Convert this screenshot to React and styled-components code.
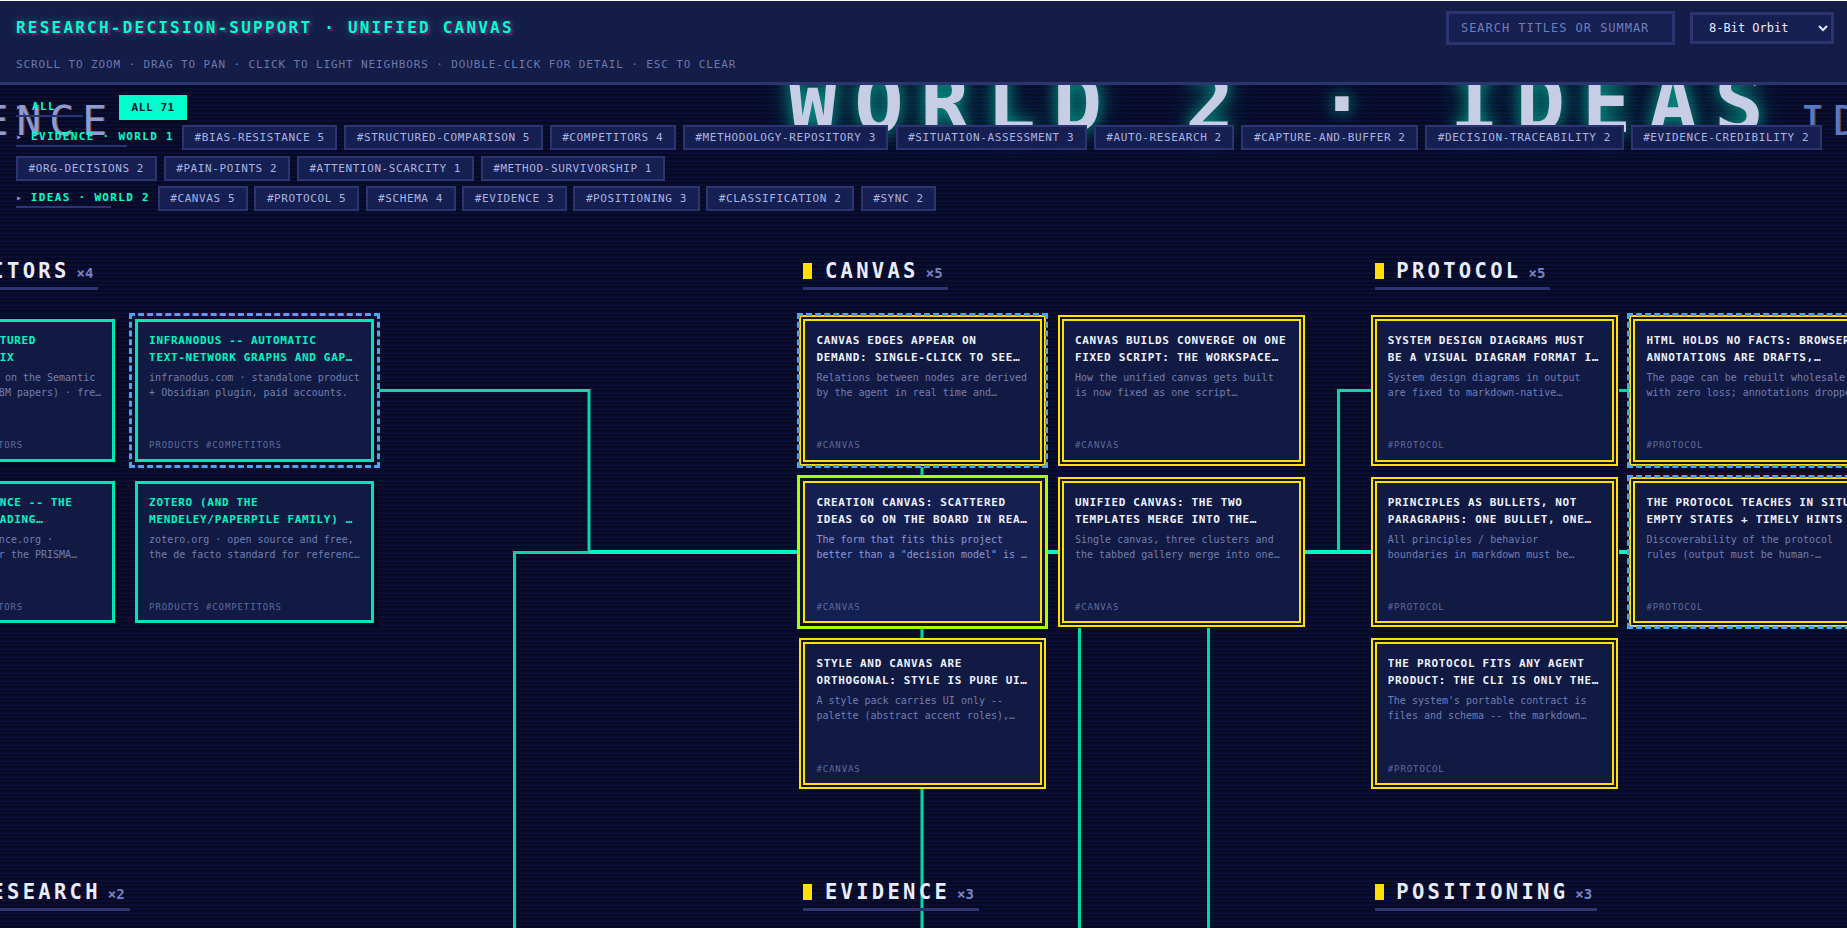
import React from "react";
import styled, { createGlobalStyle, css } from "styled-components";

const MONO = `"DejaVu Sans Mono", "Liberation Mono", monospace`;

const GlobalStyle = createGlobalStyle`
  html, body {
    margin: 0;
    padding: 0;
    height: 100%;
    overflow: hidden;
    background: #ffffff;
  }
  * { box-sizing: border-box; }
`;

const Page = styled.div`
  position: relative;
  margin-top: 1px;
  height: 927px;
  overflow: hidden;
  background: #0a0e33;
  font-family: ${MONO};
`;

const Canvas = styled.div`
  position: absolute;
  inset: -1px 0 0 0;
  background: repeating-linear-gradient(
    0deg,
    rgba(0, 0, 0, 0.32) 0 2px,
    transparent 2px 4px
  );
`;

const WorldLabel = styled.div`
  position: absolute;
  left: ${(p) => p.$x}px;
  top: ${(p) => p.$y}px;
  white-space: nowrap;
  font-size: 41px;
  line-height: 48px;
  letter-spacing: 8.2px;
  color: ${(p) => p.$color};
  text-shadow: 1px 0 0 rgba(190, 120, 70, 0.55);
`;

const WorldTitle = styled.div`
  position: absolute;
  left: 788px;
  top: 56px;
  white-space: nowrap;
  font-size: 82px;
  line-height: 96px;
  font-weight: 700;
  letter-spacing: 16.8px;
  color: #c6cde4;
  text-shadow: 0 0 16px rgba(0, 255, 204, 0.55), 0 0 32px rgba(0, 255, 204, 0.3);
`;

const Edges = styled.svg`
  position: absolute;
  left: 0;
  top: 0;
`;

const Cluster = styled.section`
  position: absolute;
  left: ${(p) => p.$x}px;
  top: ${(p) => p.$y}px;
`;

const Heading = styled.h2`
  display: inline-flex;
  align-items: center;
  margin: 0;
  height: 32px;
  padding: 0 5px 0 0;
  border-bottom: 3px solid #2c3570;
  &::before {
    content: "";
    width: 9px;
    height: 16px;
    margin: 0 12.5px 3px 0;
    background: #ffe000;
  }
`;

const HeadingName = styled.span`
  font-size: 20.5px;
  font-weight: 700;
  letter-spacing: 3.3px;
  color: #e8ecff;
  margin-bottom: 3px;
`;

const HeadingCount = styled.span`
  margin-left: 7px;
  font-size: 14px;
  font-weight: 700;
  color: #7683c0;
`;

const CardGrid = styled.div`
  display: grid;
  grid-template-columns: 239px 239px;
  grid-auto-rows: 142.7px;
  column-gap: 19.6px;
  row-gap: 19px;
  margin-top: 29px;
`;

const Card = styled.article`
  display: flex;
  flex-direction: column;
  ${(p) =>
    p.$kind === "idea"
      ? css`
          padding: 11px 11px 7.5px;
          border: 2px solid #ffe000;
          box-shadow: 0 0 0 2px #101326, 0 0 0 4px #ffe000;
        `
      : css`
          padding: 10px 10px 6.5px 11.5px;
          border: 3px solid #00e5b8;
          box-shadow: 4px 4px 0 rgba(0, 0, 0, 0.3);
        `}
  background: ${(p) => (p.$picked ? "#152052" : "#111a42")};
  ${(p) =>
    p.$picked &&
    css`
      box-shadow: 0 0 0 3px #101326, 0 0 0 6px #a6ff00;
    `}
  ${(p) =>
    p.$near &&
    css`
      outline: 3px dashed #4aa3f5;
      outline-offset: 3px;
    `}
`;

const CardTitle = styled.h3`
  margin: 0;
  height: 34px;
  font-size: 11px;
  line-height: 17px;
  font-weight: 700;
  letter-spacing: 0.66px;
  color: ${(p) => (p.$kind === "idea" ? "#eef1ff" : "#00f5c4")};
  display: -webkit-box;
  -webkit-box-orient: vertical;
  -webkit-line-clamp: 2;
  overflow: hidden;
`;

const CardBody = styled.p`
  margin: 4px 0 0;
  font-size: 10px;
  line-height: 15px;
  color: ${(p) => (p.$picked ? "#8c99d0" : "#717eb4")};
  display: -webkit-box;
  -webkit-box-orient: vertical;
  -webkit-line-clamp: 2;
  overflow: hidden;
`;

const CardTag = styled.div`
  margin-top: auto;
  font-size: 9px;
  line-height: 14px;
  letter-spacing: 0.9px;
  color: #5f6b9e;
`;

const Header = styled.header`
  position: relative;
  z-index: 2;
  height: 84px;
  padding: 0 13px 0 16px;
  border-bottom: 3px solid #2c3570;
  background: #141c48;
`;

const HeaderTop = styled.div`
  display: flex;
  align-items: center;
  justify-content: space-between;
  height: 53px;
`;

const AppTitle = styled.h1`
  margin: 0;
  font-size: 16px;
  font-weight: 700;
  letter-spacing: 2.22px;
  color: #00ffcc;
  text-shadow: 2px 2px 0 #6b1470, 0 0 8px rgba(0, 255, 204, 0.45);
`;

const Controls = styled.div`
  display: flex;
  align-items: center;
  gap: 15px;
`;

const Search = styled.input`
  width: 229px;
  height: 34px;
  padding: 0 22px 0 12px;
  border: 3px solid #2c3570;
  background: #161f52;
  color: #dfe5ff;
  font-family: ${MONO};
  font-size: 12px;
  letter-spacing: 0.96px;
  outline: none;
  &::placeholder {
    color: #707eb8;
    opacity: 1;
  }
`;

const Picker = styled.select`
  width: 144px;
  height: 32px;
  padding: 0 0 0 12px;
  border: 3px solid #2c3570;
  border-radius: 0;
  background: #161f52;
  color: #e6eaff;
  font-family: ${MONO};
  font-size: 12px;
`;

const Hint = styled.div`
  margin-top: 4px;
  font-size: 11px;
  line-height: 14px;
  letter-spacing: 0.88px;
  color: #6c79ad;
`;

const FilterBar = styled.nav`
  position: relative;
  z-index: 2;
  display: flex;
  flex-direction: column;
  gap: 5.5px;
  padding: 10px 16px 0;
`;

const FilterRow = styled.div`
  display: flex;
  flex-wrap: wrap;
  align-items: center;
  column-gap: ${(p) => p.$gap || 7}px;
  row-gap: 6.5px;
`;

const GroupLabel = styled.div`
  position: relative;
  display: flex;
  align-items: center;
  width: ${(p) => p.$box}px;
  margin-right: 1px;
  height: 24.5px;
  padding-bottom: 2px;
  white-space: nowrap;
  font-size: 11px;
  font-weight: 700;
  letter-spacing: 1.32px;
  color: #00ffcc;
  &::before {
    content: "▸";
    width: 16px;
    font-size: 10px;
    font-weight: 400;
    color: #8b96c4;
  }
  &::after {
    content: "";
    position: absolute;
    left: 0;
    bottom: 2.5px;
    width: ${(p) => p.$rule}px;
    height: 2px;
    background: #2c3570;
  }
`;

const Tag = styled.button`
  height: 24.5px;
  padding: 0 10.5px;
  border: 2px solid ${(p) => (p.$active ? "#00ffcc" : "#2c3570")};
  background: ${(p) => (p.$active ? "#00ffcc" : "#161f52")};
  color: ${(p) => (p.$active ? "#0a0f33" : "#aab4e0")};
  font-family: ${MONO};
  font-size: 11px;
  font-weight: ${(p) => (p.$active ? 700 : 400)};
  letter-spacing: 0.6px;
  white-space: nowrap;
  box-shadow: ${(p) => (p.$active ? "2px 2px 0 rgba(0,0,0,.4)" : "none")};
`;

const evidenceTags = [
  "#BIAS-RESISTANCE 5",
  "#STRUCTURED-COMPARISON 5",
  "#COMPETITORS 4",
  "#METHODOLOGY-REPOSITORY 3",
  "#SITUATION-ASSESSMENT 3",
  "#AUTO-RESEARCH 2",
  "#CAPTURE-AND-BUFFER 2",
  "#DECISION-TRACEABILITY 2",
  "#EVIDENCE-CREDIBILITY 2",
  "#ORG-DECISIONS 2",
  "#PAIN-POINTS 2",
  "#ATTENTION-SCARCITY 1",
  "#METHOD-SURVIVORSHIP 1",
];

const ideaTags = [
  "#CANVAS 5",
  "#PROTOCOL 5",
  "#SCHEMA 4",
  "#EVIDENCE 3",
  "#POSITIONING 3",
  "#CLASSIFICATION 2",
  "#SYNC 2",
];

const competitors = [
  {
    title: "ELICIT -- STRUCTURED LITERATURE MATRIX",
    body: "elicit.com · built on the Semantic Scholar corpus (138M papers) · free tier plus paid plans.",
    near: false,
  },
  {
    title: "INFRANODUS -- AUTOMATIC TEXT-\u2060NETWORK GRAPHS AND GAP ANALYSIS TOOLING",
    body: "infranodus.com · standalone product + Obsidian plugin, paid accounts.",
    near: true,
  },
  {
    title: "COCHRANE COVIDENCE -- THE REVIEW-\u2060STAGE READING CHECKLISTS-AND-MORE",
    body: "cochrane.us covidence.org · subscribers use for the PRISMA workflow and screening.",
    near: false,
  },
  {
    title: "ZOTERO (AND THE MENDELEY/\u2060PAPERPILE FAMILY) …",
    body: "zotero.org · open source and free, the de facto standard for reference management.",
    near: false,
  },
];

const canvasCards = [
  {
    title: "CANVAS EDGES APPEAR ON DEMAND: SINGLE-CLICK TO SEE RELATIONS AT ONCE",
    body: "Relations between nodes are derived by the agent in real time and rendered only on request.",
    near: true,
  },
  {
    title: "CANVAS BUILDS CONVERGE ON ONE FIXED SCRIPT: THE WORKSPACE GENERATES ALL",
    body: "How the unified canvas gets built is now fixed as one script generator for every workspace.",
  },
  {
    title: "CREATION CANVAS: SCATTERED IDEAS GO ON THE BOARD IN REAL TIME AS THEY COME",
    body: 'The form that fits this project better than a "decision model" is a scattered board.',
    picked: true,
  },
  {
    title: "UNIFIED CANVAS: THE TWO TEMPLATES MERGE INTO THE SINGLE PAGE EVERYWHERE",
    body: "Single canvas, three clusters and the tabbed gallery merge into one single page.",
  },
  {
    title: "STYLE AND CANVAS ARE ORTHOGONAL: STYLE IS PURE UI ONLY AND NOTHING MORE",
    body: "A style pack carries UI only -- palette (abstract accent roles), type and spacing.",
  },
];

const protocolCards = [
  {
    title: "SYSTEM DESIGN DIAGRAMS MUST BE A VISUAL DIAGRAM FORMAT IN THE OUTPUT",
    body: "System design diagrams in output are fixed to markdown-native diagrams only, never images.",
  },
  {
    title: "HTML HOLDS NO FACTS: BROWSER ANNOTATIONS ARE DRAFTS, MARKDOWN IS THE SOURCE",
    body: "The page can be rebuilt wholesale with zero loss; annotations dropped",
    near: true,
  },
  {
    title: "PRINCIPLES AS BULLETS, NOT PARAGRAPHS: ONE BULLET, ONE RULE AND NO MORE",
    body: "All principles / behavior boundaries in markdown must be bullets rather than prose.",
  },
  {
    title: "THE PROTOCOL TEACHES IN SITU: EMPTY STATES + TIMELY HINTS A BETTER WAY THAN DOCS",
    body: "Discoverability of the protocol rules (output must be human-readable and self explaining).",
    near: true,
  },
  {
    title: "THE PROTOCOL FITS ANY AGENT PRODUCT: THE CLI IS ONLY THE SHELL AROUND IT",
    body: "The system's portable contract is files and schema -- the markdown tree and its rules.",
  },
];

const NodeCard = ({ kind, tag, title, body, near, picked }) => (
  <Card $kind={kind} $near={near} $picked={picked}>
    <CardTitle $kind={kind}>{title}</CardTitle>
    <CardBody $picked={picked}>{body}</CardBody>
    <CardTag>{tag}</CardTag>
  </Card>
);

const ClusterHead = ({ name, count }) => (
  <Heading>
    <HeadingName>{name}</HeadingName>
    <HeadingCount>×{count}</HeadingCount>
  </Heading>
);

const App = () => {
  return (
    <Page>
      <GlobalStyle />
      <Canvas>
        <WorldLabel $x={-148} $y={97} $color="#8e9cd2">EVIDENCE</WorldLabel>
        <WorldTitle>WORLD 2 · IDEAS</WorldTitle>
        <WorldLabel $x={1800} $y={97} $color="#5a78c8">IDEAS</WorldLabel>

        <Edges width="1847" height="928" fill="none">
          <g stroke="#00d8a8" strokeWidth="3">
            <path d="M379 390.5H589V552" />
            <path d="M514.5 928V552.5H798" />
            <path d="M922 467V475" />
            <path d="M922 628V928" />
            <path d="M1079.5 628V928" />
            <path d="M1208.5 628V928" />
            <path d="M1371 390.5H1338.5V552" />
            <path d="M1619 390.5H1631" />
          </g>
          <g stroke="#00f5c4" strokeWidth="4">
            <path d="M589 552H798" />
            <path d="M1048 552H1058" />
            <path d="M1305 552H1371" />
            <path d="M1619 552H1631" />
          </g>
        </Edges>

        <Cluster $x={-124} $y={258}>
          <ClusterHead name="COMPETITORS" count={4} />
          <CardGrid>
            {competitors.map((c) => (
              <NodeCard key={c.title} kind="product" tag="PRODUCTS #COMPETITORS" {...c} />
            ))}
          </CardGrid>
        </Cluster>

        <Cluster $x={803.4} $y={258}>
          <ClusterHead name="CANVAS" count={5} />
          <CardGrid>
            {canvasCards.map((c) => (
              <NodeCard key={c.title} kind="idea" tag="#CANVAS" {...c} />
            ))}
          </CardGrid>
        </Cluster>

        <Cluster $x={1374.8} $y={258}>
          <ClusterHead name="PROTOCOL" count={5} />
          <CardGrid>
            {protocolCards.map((c) => (
              <NodeCard key={c.title} kind="idea" tag="#PROTOCOL" {...c} />
            ))}
          </CardGrid>
        </Cluster>

        <Cluster $x={-124} $y={879}>
          <ClusterHead name="AUTO-RESEARCH" count={2} />
        </Cluster>
        <Cluster $x={803.4} $y={879}>
          <ClusterHead name="EVIDENCE" count={3} />
        </Cluster>
        <Cluster $x={1374.8} $y={879}>
          <ClusterHead name="POSITIONING" count={3} />
        </Cluster>
      </Canvas>

      <Header>
        <HeaderTop>
          <AppTitle>RESEARCH-DECISION-SUPPORT · UNIFIED CANVAS</AppTitle>
          <Controls>
            <Search placeholder="SEARCH TITLES OR SUMMARIES" />
            <Picker defaultValue="orbit">
              <option value="orbit">8-Bit Orbit</option>
              <option value="paper">Plain Paper</option>
            </Picker>
          </Controls>
        </HeaderTop>
        <Hint>
          SCROLL TO ZOOM · DRAG TO PAN · CLICK TO LIGHT NEIGHBORS · DOUBLE-CLICK FOR DETAIL · ESC TO CLEAR
        </Hint>
      </Header>

      <FilterBar>
        <FilterRow>
          <GroupLabel $box={95} $rule={67}>ALL</GroupLabel>
          <Tag $active>ALL 71</Tag>
        </FilterRow>
        <FilterRow $gap={7.1}>
          <GroupLabel $box={158} $rule={111}>EVIDENCE · WORLD 1</GroupLabel>
          {evidenceTags.map((t) => (
            <Tag key={t}>{t}</Tag>
          ))}
        </FilterRow>
        <FilterRow $gap={6.7}>
          <GroupLabel $box={134} $rule={95}>IDEAS · WORLD 2</GroupLabel>
          {ideaTags.map((t) => (
            <Tag key={t}>{t}</Tag>
          ))}
        </FilterRow>
      </FilterBar>
    </Page>
  );
};

export default App;
